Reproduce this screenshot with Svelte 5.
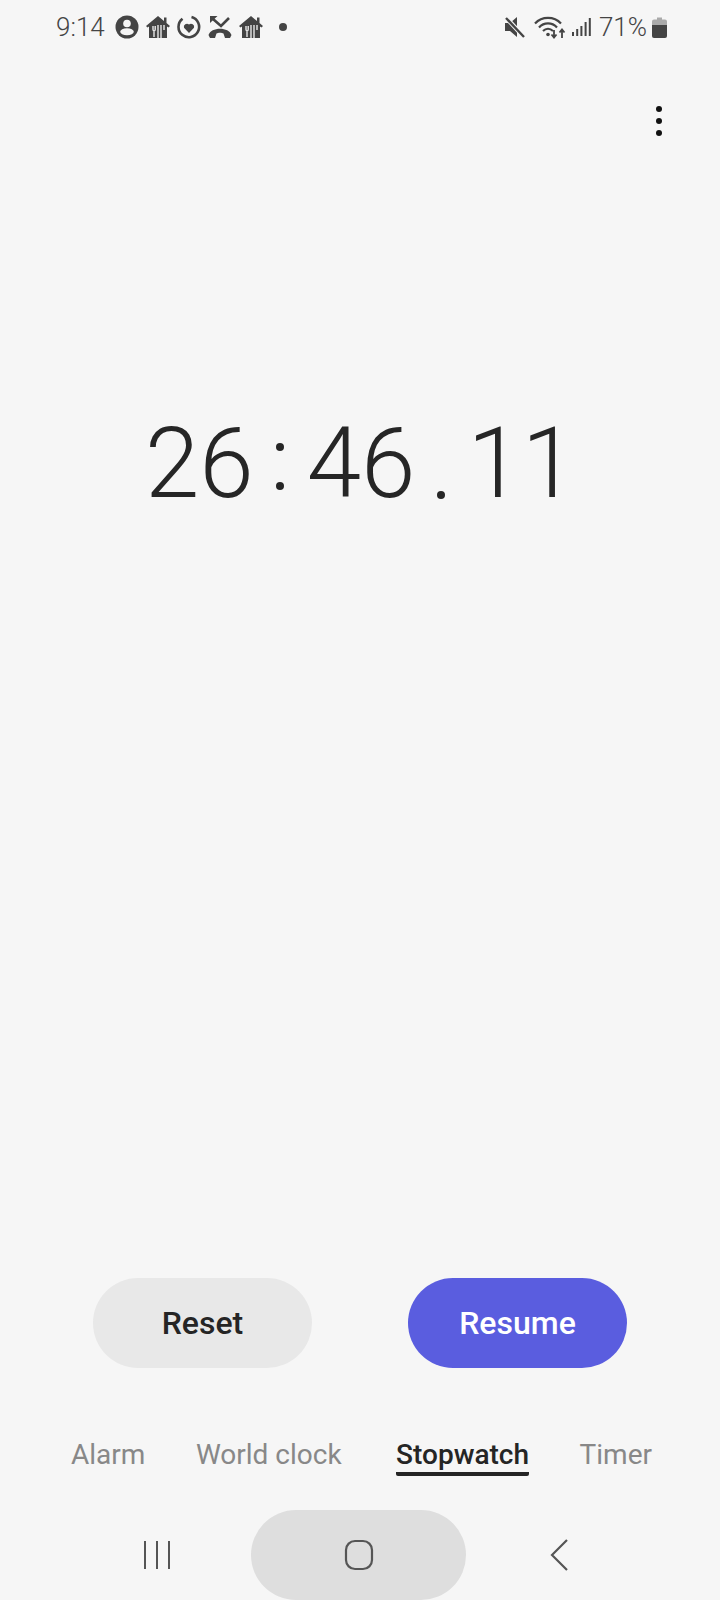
<script>
	const tabs = ['Alarm', 'World clock', 'Stopwatch', 'Timer']
	let active = $state('Stopwatch')
</script>

<div class="screen">
	<header class="status">
		<div class="status-left">
			<span class="clock">9:14</span>
			<svg class="ic" width="24" height="24" viewBox="0 0 24 24">
				<circle cx="12" cy="12" r="11.5" fill="#444" />
				<circle cx="12" cy="8.500" r="3.800" fill="#f6f6f6" />
				<ellipse cx="12" cy="16.800" rx="6.800" ry="3.500" fill="#f6f6f6" />
			</svg>
			<svg class="ic" width="24" height="24" viewBox="0 0 24 24">
				<path d="M12 1 L18 6 V2.500 H20.500 V8 L24 11 L22.500 12.500 L21 11.500 V23 H3 V11.500 L1.500 12.500 L0 11 Z" fill="#444" />
				<path d="M7 11 V14.500 Q7 16 8 16 V22 M9.200 11 V14.500 Q9.200 16 8 16 M12 10 V23 M15 10 V23 M18 10 V15" fill="none" stroke="#f6f6f6" stroke-width="1.300" />
			</svg>
			<svg class="ic" width="24" height="24" viewBox="0 0 24 24">
				<path d="M14.500 2 A10.300 10.300 0 1 1 5.500 3.800" fill="none" stroke="#444" stroke-width="2.600" />
				<path d="M12 18 L7 12.800 A3.100 3.100 0 0 1 12 9.500 A3.100 3.100 0 0 1 17 12.800 Z" fill="#444" />
			</svg>
			<svg class="ic" width="24" height="24" viewBox="0 0 24 24">
				<path d="M21 3 L13 11 L5 4" fill="none" stroke="#444" stroke-width="2.600" />
				<path d="M2 1 H9.500 L2 8 Z" fill="#444" />
				<path d="M0.500 20 C3 11.500 21 11.500 23.500 20 L22 23 L17 23 L15.500 18.500 C14 17.500 10 17.500 8.500 18.500 L7 23 L2 23 Z" fill="#444" />
			</svg>
			<svg class="ic" width="24" height="24" viewBox="0 0 24 24">
				<path d="M12 1 L18 6 V2.500 H20.500 V8 L24 11 L22.500 12.500 L21 11.500 V23 H3 V11.500 L1.500 12.500 L0 11 Z" fill="#444" />
				<path d="M7 11 V14.500 Q7 16 8 16 V22 M9.200 11 V14.500 Q9.200 16 8 16 M12 10 V23 M15 10 V23 M18 10 V15" fill="none" stroke="#f6f6f6" stroke-width="1.300" />
			</svg>
			<span class="notif-dot"></span>
		</div>
		<div class="status-right">
			<svg width="22" height="24" viewBox="0 0 22 24">
				<path d="M1 8 H6 L13 2 V22 L6 16 H1 Z" fill="#444" />
				<path d="M1.500 2 L20 22" stroke="#f6f6f6" stroke-width="4.500" />
				<path d="M2 3 L20 22" stroke="#444" stroke-width="2.400" />
			</svg>
			<svg class="wifi" width="33" height="24" viewBox="0 0 33 24">
				<path d="M1 8.500 C8 1 20 1 27 8.500" fill="none" stroke="#444" stroke-width="2.200" />
				<path d="M5 12.500 C10 7 18 7 23 12.500" fill="none" stroke="#444" stroke-width="2.200" />
				<path d="M9 16 C12 13 16 13 19 16" fill="none" stroke="#444" stroke-width="2.200" />
				<circle cx="14" cy="19.500" r="1.800" fill="#444" />
				<path d="M20 15 V22 M17.500 19.500 L20 22.500 L22.500 19.500" fill="none" stroke="#444" stroke-width="1.800" />
				<path d="M28 23 V15 M25.500 17.500 L28 14.500 L30.500 17.500" fill="none" stroke="#444" stroke-width="1.800" />
			</svg>
			<svg class="signal" width="20" height="20" viewBox="0 0 20 20">
				<path d="M1 19 V15 M5.200 19 V12 M9.400 19 V9 M13.600 19 V5 M17.800 19 V1" stroke="#444" stroke-width="2" />
			</svg>
			<span class="pct">71%</span>
			<svg class="batt" width="15" height="21" viewBox="0 0 15 21">
				<path d="M5 0.500 H10 V2.500 H13 Q15 2.500 15 4.500 V8 H0 V4.500 Q0 2.500 2 2.500 H5 Z" fill="#aaa" />
				<path d="M0 8 H15 V19 Q15 21 13 21 H2 Q0 21 0 19 Z" fill="#444" />
			</svg>
		</div>
	</header>

	<div class="menu-row">
		<button class="more" aria-label="More options">
			<span></span><span></span><span></span>
		</button>
	</div>

	<div class="time">
		<span class="pair"><span>2</span><span>6</span></span>
		<span class="colon"><i></i><i></i></span>
		<span class="pair"><span>4</span><span>6</span></span>
		<span class="point"><i></i></span>
		<span class="pair"><span>1</span><span>1</span></span>
	</div>

	<div class="spacer"></div>

	<div class="actions">
		<button class="pill reset">Reset</button>
		<button class="pill resume">Resume</button>
	</div>

	<nav class="tabs">
		{#each tabs as tab}
			<button class="tab" class:active={tab === active} onclick={() => active = tab}>{tab}</button>
		{/each}
	</nav>

	<div class="navbar">
		<svg width="28" height="28" viewBox="0 0 28 28">
			<path d="M2 0 V28 M14 0 V28 M26 0 V28" stroke="#555" stroke-width="2" />
		</svg>
		<div class="home-pill">
			<svg width="30" height="32" viewBox="0 0 30 32">
				<rect x="2" y="2" width="26" height="28" rx="9" fill="none" stroke="#555" stroke-width="2.200" />
			</svg>
		</div>
		<svg width="20" height="32" viewBox="0 0 20 32">
			<path d="M17 1 L2 16 L17 31" fill="none" stroke="#555" stroke-width="2.200" />
		</svg>
	</div>
</div>

<style>
	:global(body) {
		margin: 0;
		background: #f6f6f6;
	}

	.screen {
		width: 720px;
		height: 1600px;
		overflow: hidden;
		display: flex;
		flex-direction: column;
		background: #f6f6f6;
		font-family: Roboto, "Liberation Sans", sans-serif;
	}

	.status {
		height: 54px;
		flex-shrink: 0;
		display: flex;
		align-items: center;
		justify-content: space-between;
		padding: 0 53px 0 56px;
		color: #444;
	}

	.status-left, .status-right {
		display: flex;
		align-items: center;
	}

	.clock {
		font-size: 26px;
		font-weight: 300;
		width: 59px;
	}

	.ic {
		margin-right: 7px;
	}

	.notif-dot {
		width: 8px;
		height: 8px;
		border-radius: 50%;
		background: #444;
		margin-left: 9px;
	}

	.status-right svg {
		flex-shrink: 0;
	}

	.wifi {
		margin-left: 8px;
	}

	.signal {
		margin-left: 5px;
	}

	.pct {
		font-size: 26px;
		font-weight: 300;
		margin-left: 7px;
		margin-right: 5px;
	}

	.menu-row {
		display: flex;
		justify-content: flex-end;
		padding: 52px 54px 0 0;
	}

	.more {
		background: none;
		border: none;
		padding: 0;
		width: 14px;
		display: flex;
		flex-direction: column;
		align-items: center;
		gap: 6px;
		cursor: pointer;
	}

	.more span {
		width: 6px;
		height: 6px;
		border-radius: 50%;
		background: #111;
	}

	.time {
		margin-top: 270px;
		padding-left: 145px;
		display: flex;
		align-items: flex-end;
		height: 116px;
		font-size: 98px;
		font-weight: 300;
		line-height: 116px;
		color: #262626;
	}

	.pair {
		display: flex;
	}

	.colon {
		width: 53px;
		height: 116px;
		display: flex;
		flex-direction: column;
		align-items: center;
		gap: 31px;
		padding-top: 37px;
		box-sizing: border-box;
	}

	.colon i, .point i {
		width: 8px;
		height: 8px;
		border-radius: 50%;
		background: #262626;
	}

	.point {
		width: 52px;
		height: 116px;
		display: flex;
		justify-content: center;
		align-items: flex-end;
		padding: 0 8px 23px 7px;
		box-sizing: border-box;
	}

	.spacer {
		flex: 1;
	}

	.actions {
		display: flex;
		justify-content: space-between;
		padding: 0 93px;
	}

	.pill {
		width: 219px;
		height: 90px;
		border: none;
		border-radius: 45px;
		font: inherit;
		font-size: 32px;
		font-weight: 500;
		cursor: pointer;
	}

	.reset {
		background: #e8e8e8;
		color: #252525;
	}

	.resume {
		background: #5a5ddf;
		color: #fff;
	}

	.tabs {
		margin-top: 62px;
		height: 46px;
		padding: 0 68px 0 71px;
		display: flex;
		justify-content: space-between;
	}

	.tab {
		background: none;
		border: none;
		border-bottom: 4px solid transparent;
		border-radius: 2px;
		padding: 8px 0 0;
		font: inherit;
		font-size: 28px;
		line-height: 34px;
		color: #888;
		cursor: pointer;
		height: 46px;
		box-sizing: border-box;
	}

	.tab.active {
		color: #252525;
		font-weight: 500;
		border-bottom-color: #252525;
		margin-left: 4px;
	}

	.navbar {
		margin-top: 34px;
		height: 90px;
		flex-shrink: 0;
		display: flex;
		align-items: center;
		justify-content: space-between;
		padding: 0 150px 0 143px;
	}

	.home-pill {
		width: 215px;
		height: 90px;
		border-radius: 45px;
		background: #dedede;
		margin-right: 4px;
		display: flex;
		align-items: center;
		justify-content: center;
	}
</style>
